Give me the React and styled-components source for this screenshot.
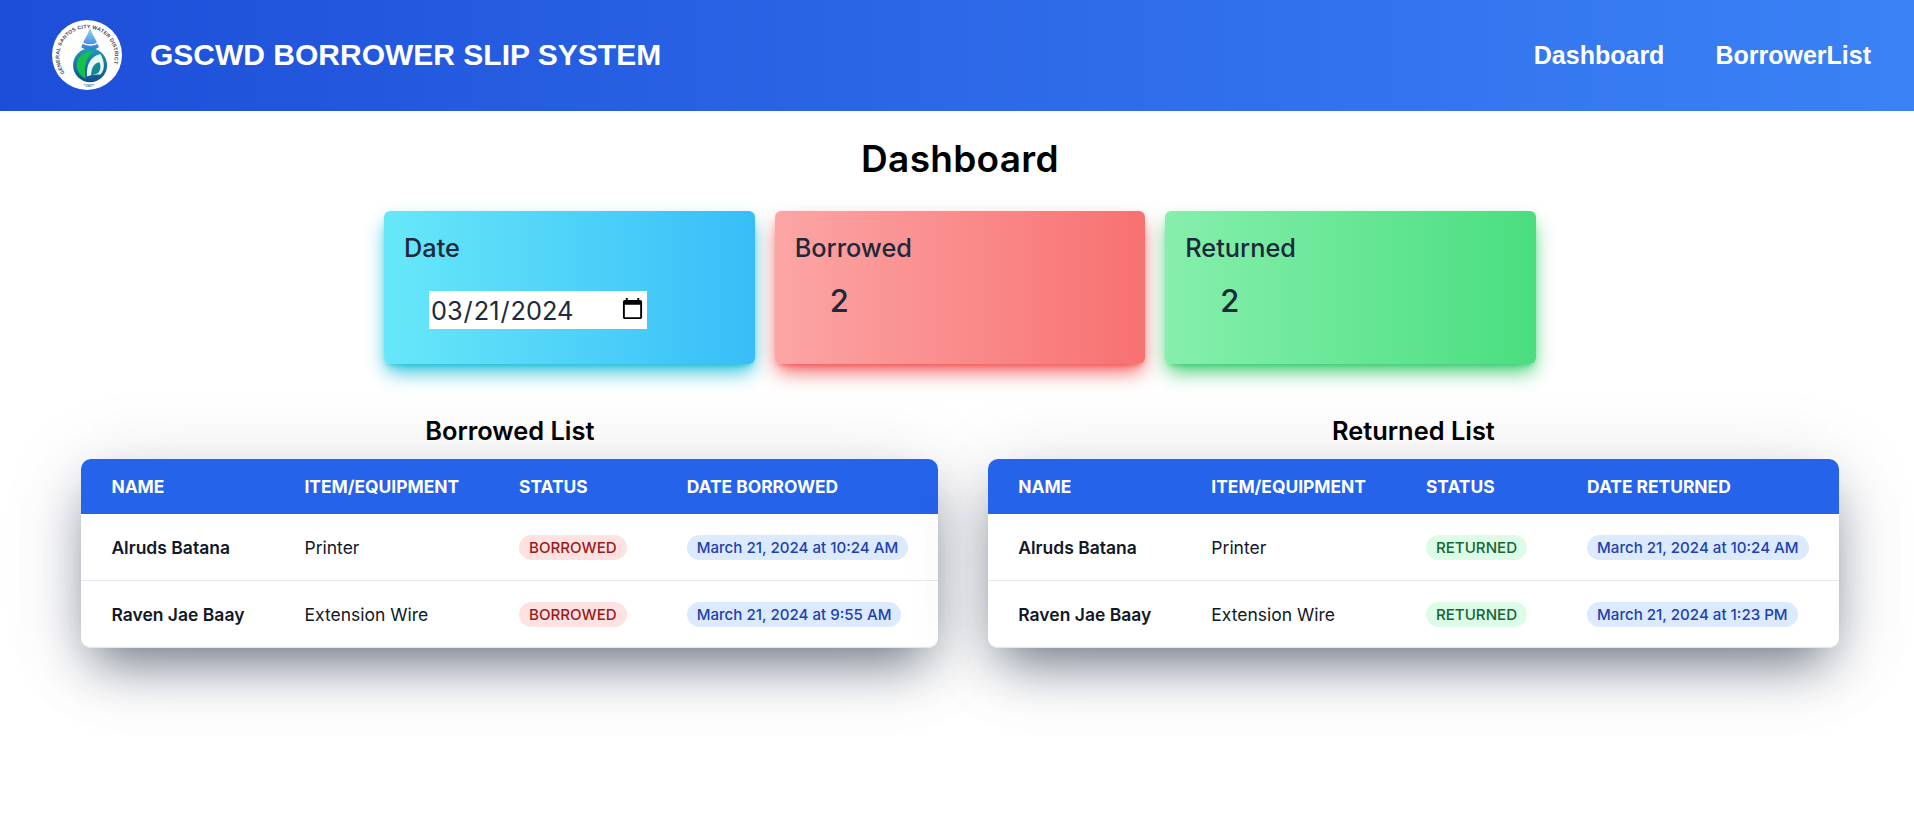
import { createGlobalStyle, styled } from "styled-components";

const GlobalStyle = createGlobalStyle`
    html, body {
        margin: 0;
        padding: 0;
        background: #fff;
        font-family: Inter, "Liberation Sans", sans-serif;
    }
`;

const Page = styled.div`
    min-height: 840px;
    overflow: hidden;
`;

const Navbar = styled.header`
    height: 111px;
    box-sizing: border-box;
    display: flex;
    align-items: center;
    justify-content: space-between;
    padding: 0 43px 2px 52px;
    background: linear-gradient(to right, #1d4ed8, #3b82f6);
    color: #fff;
    font-family: "Liberation Sans", Arial, sans-serif;
    font-weight: 700;
`;

const Brand = styled.div`
    display: flex;
    align-items: center;
    gap: 28px;
`;

const BrandTitle = styled.div`
    font-size: 30px;
    line-height: 36px;
`;

const NavLinks = styled.nav`
    display: flex;
    gap: 51px;
`;

const NavLink = styled.a`
    font-size: 25px;
    line-height: 32px;
    color: #fff;
    text-decoration: none;
`;

const Main = styled.main`
    padding-left: 6px;
`;

const PageTitle = styled.h1`
    margin: 28px 0 0;
    text-align: center;
    font-size: 37px;
    line-height: 40px;
    font-weight: 600;
    letter-spacing: 0.3px;
    color: #000;
`;

const Cards = styled.div`
    display: flex;
    justify-content: center;
    gap: 20px;
    margin-top: 32px;
`;

const Card = styled.div`
    width: 370.67px;
    height: 153px;
    box-sizing: border-box;
    padding: 21px 20px 20px;
    border-radius: 6px;
    color: #1e293b;
    background: linear-gradient(to right, ${(props) => props.from}, ${(props) => props.to});
    box-shadow: 0 10px 20px -3px ${(props) => props.glow}, 0 4px 6px -4px ${(props) => props.glow};
`;

const CardLabel = styled.div`
    font-size: 25.3px;
    line-height: 32px;
    font-weight: 500;
`;

const CardValue = styled.div`
    margin: 19px 0 0 35px;
    font-size: 31px;
    line-height: 36px;
    font-weight: 500;
`;

const DateInput = styled.input`
    display: block;
    width: 218px;
    height: 38px;
    box-sizing: border-box;
    margin: 27px 0 0 25px;
    padding: 0 0 0 1px;
    border: 0;
    background: #fff;
    color: #1e293b;
    font-family: Inter, sans-serif;
    font-size: 25.3px;
`;

const Lists = styled.div`
    display: flex;
    justify-content: center;
    gap: 50px;
    margin-top: 51px;
`;

const ListTitle = styled.h2`
    margin: 0 0 12px;
    text-align: center;
    font-size: 25.4px;
    line-height: 32px;
    font-weight: 600;
    color: #000;
`;

const TableCard = styled.div`
    border-radius: 10px;
    overflow: hidden;
    background: #fff;
    border-bottom: 1px solid #e5e7eb;
`;

const TableShadow = styled.div`
    border-radius: 10px;
    box-shadow: 0 25px 50px -12px rgba(10, 25, 50, 0.58), 0 10px 90px rgba(10, 25, 50, 0.1);
`;

const Table = styled.table`
    border-collapse: collapse;
    white-space: nowrap;
`;

const HeadCell = styled.th`
    height: 55px;
    padding: 0 30px;
    background: #2563eb;
    color: #fff;
    font-size: 17.4px;
    font-weight: 700;
    text-align: left;
    text-transform: uppercase;
`;

const Row = styled.tr`
    height: 67px;
    &:first-child {
        height: 66px;
    }
    & + & {
        border-top: 1px solid #e5e7eb;
    }
`;

const Cell = styled.td`
    padding: 1px 30px 0;
    font-size: 17.5px;
    color: #111827;
    font-weight: ${(props) => (props.$strong ? 600 : 400)};
`;

const tones = {
    red: "background: #fee2e2; color: #991b1b;",
    green: "background: #dcfce7; color: #166534;",
    blue: "background: #dbeafe; color: #1e40af;",
};

const Pill = styled.span`
    display: inline-block;
    padding: 0 10px;
    border-radius: 999px;
    font-size: 15.1px;
    line-height: 25px;
    font-weight: 500;
    ${(props) => tones[props.$tone]}
`;

function Logo() {
    return (
        <svg width="70" height="70" viewBox="0 0 68 68">
            <defs>
                <path id="ring" d="M 12.5 51.5 A 27 27 0 1 1 55.5 51.5" />
                <linearGradient id="drop" x1="0" y1="0" x2="0" y2="1">
                    <stop offset="0" stopColor="#8fdcf5" />
                    <stop offset="1" stopColor="#2f6fd8" />
                </linearGradient>
                <linearGradient id="ball" x1="0" y1="0" x2="0" y2="1">
                    <stop offset="0" stopColor="#1f9ab8" />
                    <stop offset="1" stopColor="#0f4f8f" />
                </linearGradient>
            </defs>
            <circle cx="34" cy="34" r="34" fill="#fff" />
            <text fontFamily="Liberation Sans, sans-serif" fontSize="5" fontWeight="700" fill="#3b4657" letterSpacing="0.2">
                <textPath href="#ring">GENERAL SANTOS CITY WATER DISTRICT</textPath>
            </text>
            <text x="36" y="65" textAnchor="middle" fontFamily="Liberation Sans, sans-serif" fontSize="3.4" fill="#64748b">*1987*</text>
            <path d="M37 7 C38 13 44 20 46 28 C41 31 32 31 28 28 C30 20 36 13 37 7 Z" fill="url(#drop)" />
            <path d="M29 22 C33 25 41 25 45 22" fill="none" stroke="#fff" strokeWidth="1.3" />
            <path d="M28 27 C33 31 41 31 46 27" fill="none" stroke="#fff" strokeWidth="1.3" />
            <circle cx="37" cy="44" r="16.5" fill="url(#ball)" />
            <path d="M24 46 C23 36 31 30 41 30 C34 35 30 44 33 57 C28 55 25 51 24 46 Z" fill="#16c04a" />
            <path d="M34 55 C33 43 38 35 47 33 C51 40 52 48 47 53 C44 53 39 53 34 55 Z" fill="#e8f7f2" />
            <path d="M38 54 C38 46 41 42 46 41 C48 45 47 50 44 52 Z" fill="#0f8a94" />
        </svg>
    );
}

const borrowed = [
    { name: "Alruds Batana", item: "Printer", date: "March 21, 2024 at 10:24 AM" },
    { name: "Raven Jae Baay", item: "Extension Wire", date: "March 21, 2024 at 9:55 AM" },
];

const returned = [
    { name: "Alruds Batana", item: "Printer", date: "March 21, 2024 at 10:24 AM" },
    { name: "Raven Jae Baay", item: "Extension Wire", date: "March 21, 2024 at 1:23 PM" },
];

function ListTable({ title, dateHead, status, tone, rows }) {
    return (
        <section>
            <ListTitle>{title}</ListTitle>
            <TableShadow>
                <TableCard>
                    <Table>
                        <thead>
                            <tr>
                                <HeadCell>Name</HeadCell>
                                <HeadCell>Item/Equipment</HeadCell>
                                <HeadCell>Status</HeadCell>
                                <HeadCell>{dateHead}</HeadCell>
                            </tr>
                        </thead>
                        <tbody>
                            {rows.map((row) => (
                                <Row key={row.name}>
                                    <Cell $strong>{row.name}</Cell>
                                    <Cell>{row.item}</Cell>
                                    <Cell><Pill $tone={tone}>{status}</Pill></Cell>
                                    <Cell><Pill $tone="blue">{row.date}</Pill></Cell>
                                </Row>
                            ))}
                        </tbody>
                    </Table>
                </TableCard>
            </TableShadow>
        </section>
    );
}

export default function App() {
    return (
        <Page>
            <GlobalStyle />
            <Navbar>
                <Brand>
                    <Logo />
                    <BrandTitle>GSCWD BORROWER SLIP SYSTEM</BrandTitle>
                </Brand>
                <NavLinks>
                    <NavLink href="#">Dashboard</NavLink>
                    <NavLink href="#">BorrowerList</NavLink>
                </NavLinks>
            </Navbar>
            <Main>
                <PageTitle>Dashboard</PageTitle>
                <Cards>
                    <Card from="#67e8f9" to="#38bdf8" glow="rgba(6, 182, 212, 0.9)">
                        <CardLabel>Date</CardLabel>
                        <DateInput type="date" defaultValue="2024-03-21" />
                    </Card>
                    <Card from="#fca5a5" to="#f87171" glow="rgba(239, 68, 68, 0.9)">
                        <CardLabel>Borrowed</CardLabel>
                        <CardValue>2</CardValue>
                    </Card>
                    <Card from="#86efac" to="#4ade80" glow="rgba(34, 197, 94, 0.9)">
                        <CardLabel>Returned</CardLabel>
                        <CardValue>2</CardValue>
                    </Card>
                </Cards>
                <Lists>
                    <ListTable title="Borrowed List" dateHead="Date Borrowed" status="BORROWED" tone="red" rows={borrowed} />
                    <ListTable title="Returned List" dateHead="Date Returned" status="RETURNED" tone="green" rows={returned} />
                </Lists>
            </Main>
        </Page>
    );
}
